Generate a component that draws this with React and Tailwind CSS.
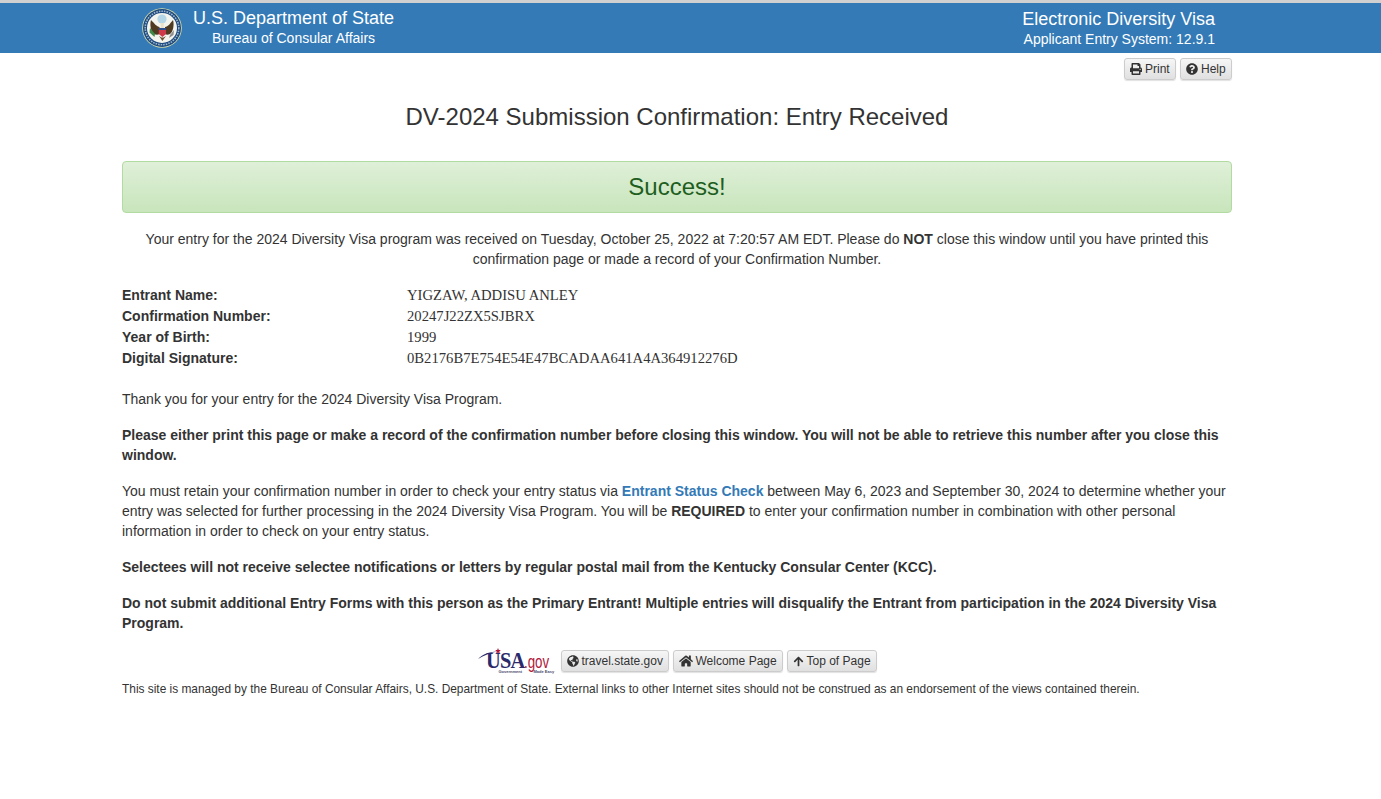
import React from "react";
import { FaPrint, FaQuestionCircle, FaGlobeAmericas, FaHome, FaArrowUp } from "react-icons/fa";

function Btn({ icon, children, className = "" }) {
  return (
    <a className={"inline-flex items-center justify-start whitespace-nowrap gap-[3px] h-[22px] pl-[5px] text-[12px] leading-[18px] text-[#333] border border-[#ccc] rounded-[3px] bg-gradient-to-b from-[#f6f6f6] to-[#e0e0e0] shadow-[0_1px_1px_rgba(0,0,0,0.12)] " + className}>
      {icon}
      <span>{children}</span>
    </a>
  );
}

function Seal() {
  return (
    <svg width="40" height="40" viewBox="0 0 40 40" className="block">
      <circle cx="20" cy="20" r="19.8" fill="#dfe0a8" />
      <circle cx="20" cy="20" r="19" fill="#1c4a80" />
      <circle cx="20" cy="20" r="16.8" fill="none" stroke="#9fb6c9" strokeWidth="1.6" strokeDasharray="1.6 1" />
      <circle cx="20" cy="20" r="15" fill="#f4f4ee" />
      <circle cx="20" cy="11" r="4.6" fill="#b5d6e6" />
      <path d="M17.5 19 C15 19 12 15 9 12 C7.5 17 9 24 12 26 C14 27 16 27 17.5 26Z" fill="#4f3a22" />
      <path d="M23 19 C26 19 28.500 15 31 12 C32.500 17 31 24 28 26 C26 27 24.500 27 23 26Z" fill="#4f3a22" />
      <path d="M18.700 15 H21.700 V20 H18.700Z" fill="#e9e1c8" />
      <path d="M16.800 20 H24 V26 L20.400 29 L16.800 26Z" fill="#cf3a48" />
      <path d="M16.800 20 H24 V22 H16.800Z" fill="#2c4f8c" />
      <path d="M8 20 L13 26 L12.500 29 L7.500 24.500Z" fill="#3f8a4a" />
      <path d="M32 22 L28 27 L27 30 L31.500 27Z" fill="#8f8f8f" />
      <path d="M17 28 L20.400 33 L24 28 L21.500 29.500 L19.500 29.500Z" fill="#6b5433" />
    </svg>
  );
}

function UsaGov() {
  return (
    <div className="relative w-[79px] h-[26px] shrink-0">
      <svg width="79" height="26" viewBox="0 0 79 26" className="absolute left-0 top-0">
        <path d="M0 11 C5 6 11 4 19 3.500 C12 5 6 7.500 0 11Z" fill="#2b2a6b" />
        <path d="M20 0 l.8 1.900 2 .2 -1.500 1.300 .5 2 -1.800 -1 -1.800 1 .5 -2 -1.500 -1.300 2 -.2z" fill="#b0173a" />
      </svg>
      <span className="absolute left-[8px] top-0 text-[24px] leading-[24px] font-bold tracking-[-1px] origin-left scale-x-[0.85] text-[#2b2a6b] font-['Liberation_Serif',serif]">USA</span>
      <span className="absolute left-[46px] top-[4px] text-[19px] leading-[20px] origin-left scale-x-[0.7] text-[#b0173a] font-['Liberation_Sans',sans-serif]">.gov</span>
      <span className="absolute left-[21px] top-[21px] text-[4px] leading-[5px] font-bold whitespace-nowrap text-[#4b4b6b]">Government</span>
      <span className="absolute left-[56px] top-[21px] text-[4px] leading-[5px] font-bold whitespace-nowrap text-[#4b4b6b]">Made Easy</span>
    </div>
  );
}

export default function App() {
  return (
    <div className="min-h-[799px] bg-white text-[14px] leading-[20px] text-[#333] font-['Liberation_Sans',Arial,sans-serif]">
      <div className="h-[3px] bg-[#d0d0d0]" />
      <header className="h-[50px] bg-[#337ab7] text-white flex">
        <div className="ml-[142px] mt-[5px]"><Seal /></div>
        <div className="ml-[11px] w-[201px] text-center whitespace-nowrap">
          <div className="text-[18px] leading-[20px] mt-[5px]">U.S. Department of State</div>
          <div className="text-[14px] leading-[20px]">Bureau of Consular Affairs</div>
        </div>
        <div className="ml-auto mr-[166px] text-right">
          <div className="text-[18px] leading-[20px] mt-[6px]">Electronic Diversity Visa</div>
          <div className="text-[14px] leading-[20px]">Applicant Entry System: 12.9.1</div>
        </div>
      </header>
      <main className="ml-[122px] w-[1110px]">
        <div className="flex justify-end gap-[4px] mt-[5px]">
          <Btn className="w-[52px]" icon={<FaPrint className="text-[12px]" />}>Print</Btn>
          <Btn className="w-[52px]" icon={<FaQuestionCircle className="text-[12px]" />}>Help</Btn>
        </div>
        <h1 className="text-[24px] leading-[26px] font-normal text-center mt-[24px]">DV-2024 Submission Confirmation: Entry Received</h1>
        <div className="mt-[31px] h-[52px] flex items-center justify-center rounded-[4px] border border-[#b2dba1] bg-gradient-to-b from-[#dff0d8] to-[#c8e5bc] text-[24px] text-[#1e5e1f]">
          Success!
        </div>
        <p className="text-center mt-[16px]">
          Your entry for the 2024 Diversity Visa program was received on Tuesday, October 25, 2022 at 7:20:57 AM EDT. Please do <b>NOT</b> close this window until you have printed this confirmation page or made a record of your Confirmation Number.
        </p>
        <dl className="mt-[16px] grid grid-cols-[285px_1fr] auto-rows-[21px] leading-[21px]">
          <dt className="font-bold">Entrant Name:</dt>
          <dd className="font-['Liberation_Serif',serif] text-[14.667px]">YIGZAW, ADDISU ANLEY</dd>
          <dt className="font-bold">Confirmation Number:</dt>
          <dd className="font-['Liberation_Serif',serif] text-[14.667px]">20247J22ZX5SJBRX</dd>
          <dt className="font-bold">Year of Birth:</dt>
          <dd className="font-['Liberation_Serif',serif] text-[14.667px]">1999</dd>
          <dt className="font-bold">Digital Signature:</dt>
          <dd className="font-['Liberation_Serif',serif] text-[14.667px]">0B2176B7E754E54E47BCADAA641A4A364912276D</dd>
        </dl>
        <p className="mt-[20px]">Thank you for your entry for the 2024 Diversity Visa Program.</p>
        <p className="mt-[16px] font-bold">Please either print this page or make a record of the confirmation number before closing this window. You will not be able to retrieve this number after you close this window.</p>
        <p className="mt-[16px]">
          You must retain your confirmation number in order to check your entry status via <a className="font-bold text-[#337ab7]">Entrant Status Check</a> between May 6, 2023 and September 30, 2024 to determine whether your entry was selected for further processing in the 2024 Diversity Visa Program. You will be <b>REQUIRED</b> to enter your confirmation number in combination with other personal information in order to check on your entry status.
        </p>
        <p className="mt-[16px] font-bold">Selectees will not receive selectee notifications or letters by regular postal mail from the Kentucky Consular Center (KCC).</p>
        <p className="mt-[16px] font-bold">Do not submit additional Entry Forms with this person as the Primary Entrant! Multiple entries will disqualify the Entrant from participation in the 2024 Diversity Visa Program.</p>
        <div className="mt-[15px] flex justify-center items-center gap-[4px]">
          <UsaGov />
          <Btn className="w-[108px]" icon={<FaGlobeAmericas className="text-[12px]" />}>travel.state.gov</Btn>
          <Btn className="w-[110px]" icon={<FaHome className="text-[14px]" />}>Welcome Page</Btn>
          <Btn className="w-[90px]" icon={<FaArrowUp className="text-[11px]" />}>Top of Page</Btn>
        </div>
        <p className="mt-[7px] text-[11.9px] leading-[17px]">This site is managed by the Bureau of Consular Affairs, U.S. Department of State. External links to other Internet sites should not be construed as an endorsement of the views contained therein.</p>
      </main>
    </div>
  );
}
